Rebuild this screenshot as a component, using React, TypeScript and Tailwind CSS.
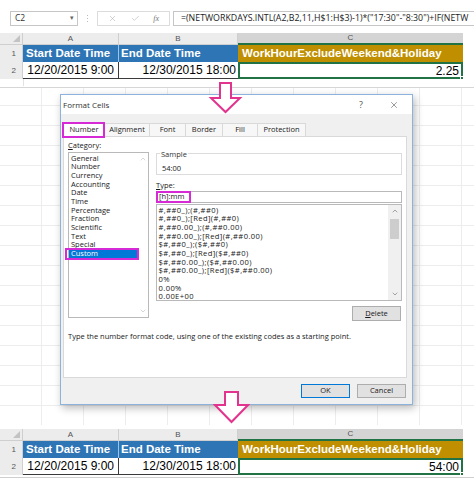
import { Check, ChevronDown, ChevronUp, X } from 'lucide-react'

// only the part of the formula that the bar has room for
const formula = '=(NETWORKDAYS.INTL(A2,B2,11,H$1:H$3)-1)*("17:30"-"8:30")+IF(NETW'

const categories = [
  'General',
  'Number',
  'Currency',
  'Accounting',
  'Date',
  'Time',
  'Percentage',
  'Fraction',
  'Scientific',
  'Text',
  'Special',
  'Custom',
]

const codes = [
  '#,##0_);(#,##0)',
  '#,##0_);[Red](#,##0)',
  '#,##0.00_);(#,##0.00)',
  '#,##0.00_);[Red](#,##0.00)',
  '$#,##0_);($#,##0)',
  '$#,##0_);[Red]($#,##0)',
  '$#,##0.00_);($#,##0.00)',
  '$#,##0.00_);[Red]($#,##0.00)',
  '0%',
  '0.00%',
  '0.00E+00',
]

const tabs = [
  { name: 'Number', w: 'w-[42px]' },
  { name: 'Alignment', w: 'w-[45px]' },
  { name: 'Font', w: 'w-[36px]' },
  { name: 'Border', w: 'w-[37px]' },
  { name: 'Fill', w: 'w-[35px]' },
  { name: 'Protection', w: 'w-[48px]' },
]

// one copy of the little worksheet, used above and below the dialog
function Sheet({ result }: { result: string }) {
  return (
    <div className="font-['Liberation_Sans',Arial,sans-serif]">
      <div className="flex h-[12px] text-[8px] text-[#555]">
        <div className="relative w-[23px] border-r border-b border-[#cfcfcf] bg-[#ececec]">
          <span className="absolute right-[2px] bottom-[2px] h-0 w-0 border-b-[7px] border-l-[7px] border-b-[#c3c3c3] border-l-transparent" />
        </div>
        <div className="flex w-[96px] items-center justify-center border-r border-b border-[#cfcfcf] bg-[#ececec]">A</div>
        <div className="flex w-[119px] items-center justify-center border-r border-b border-[#cfcfcf] bg-[#ececec]">B</div>
        <div className="flex w-[225px] items-center justify-center border-b-2 border-[#217346] bg-[#d4d4d4]">C</div>
      </div>
      <div className="flex h-[17px] text-[11.5px] font-bold text-white">
        <div className="flex w-[23px] items-center justify-end border-r border-[#cfcfcf] bg-[#ececec] pr-[6px] text-[8px] font-normal text-[#555]">
          1
        </div>
        <div className="flex w-[96px] items-center border-r border-[#9dc3e6] bg-[#2e75b6] pl-[3px]">Start Date Time</div>
        <div className="flex w-[119px] items-center bg-[#2e75b6] pl-[2px]">End Date Time</div>
        <div className="flex w-[225px] items-center bg-[#bf8f00] pl-[4px]">WorkHourExcludeWeekend&amp;Holiday</div>
      </div>
      <div className="flex h-[17px] text-[12px] text-black">
        <div className="flex w-[23px] items-center justify-end border-r border-[#cfcfcf] bg-[#ececec] pr-[6px] text-[8px] text-[#555]">
          2
        </div>
        <div className="flex w-[96px] items-center justify-end border-r border-b border-[#3a3a3a] pr-[4px]">12/20/2015 9:00</div>
        <div className="flex w-[119px] items-center justify-end border-b border-[#3a3a3a] pr-[2px]">12/30/2015 18:00</div>
        <div className="relative flex w-[225px] items-center justify-end border-2 border-[#217346] pr-[2px]">
          {result}
          <span className="absolute -right-[3px] -bottom-[3px] h-[4px] w-[4px] border border-white bg-[#217346]" />
        </div>
      </div>
    </div>
  )
}

function Magenta({ className }: { className: string }) {
  return <span className={`pointer-events-none absolute border-2 border-[#d62ad6] ${className}`} />
}

function FormatCells() {
  return (
    <div className="flex h-[311px] w-[353px] flex-col border border-[#8db2dc] bg-[#f0f0f0] font-['Open_Sans',sans-serif] text-[7.5px] text-[#1a1a1a] shadow-[2px_3px_8px_rgba(0,0,0,0.28)]">
      <div className="flex h-[19px] items-center bg-white pl-[2px] text-[8px] text-[#333]">
        <span>Format Cells</span>
        <span className="ml-auto mr-[26px] text-[9px] text-[#555]">?</span>
        <X className="mr-[13px] h-[10px] w-[10px] text-[#444]" strokeWidth={1.3} />
      </div>

      <div className="mt-[8px] flex h-[14px] pl-[2px]">
        {tabs.map((t, i) => (
          <div
            key={t.name}
            className={`relative flex items-center justify-center ${t.w} ${
              i === 0
                ? 'z-10 h-[15px] border border-b-0 border-[#d9d9d9] bg-white'
                : 'mt-[1px] h-[13px] border-t border-r border-[#d9d9d9] bg-[#f7f7f7]'
            }`}
          >
            {t.name}
            {i === 0 && <Magenta className="inset-[-1px] left-[-2px]" />}
          </div>
        ))}
      </div>

      <div className="mr-[5px] ml-[2px] flex h-[242px] flex-col border border-[#d9d9d9] bg-white pt-[4px] pr-[4px] pl-[4px]">
        <div className="flex gap-[7px]">
          <div className="flex w-[81px] flex-col">
            <div className="h-[11px] leading-[9px]">
              <u>C</u>ategory:
            </div>
            <div className="relative flex h-[166px] border border-[#b9b9b9]">
              <div className="flex flex-1 flex-col pt-[0.5px] leading-[8.7px]">
                {categories.map((c) => (
                  <div
                    key={c}
                    className={`relative h-[8.7px] pl-[2px] ${c === 'Custom' ? 'bg-[#0078d7] text-white' : ''}`}
                  >
                    {c}
                    {c === 'Custom' && <Magenta className="top-[-1.5px] right-[-2px] bottom-[-2px] left-[-4px]" />}
                  </div>
                ))}
              </div>
              <div className="flex w-[11px] flex-col items-center justify-between py-[2px] text-[#c2c2c2]">
                <ChevronUp className="h-[8px] w-[8px]" strokeWidth={2} />
                <ChevronDown className="h-[8px] w-[8px]" strokeWidth={2} />
              </div>
            </div>
          </div>

          <div className="flex flex-1 flex-col pt-[12px]">
            <div className="relative h-[22px] border border-[#dcdcdc] pt-[9px] pl-[5px]">
              <span className="absolute top-[-3px] left-[3px] bg-white px-[1px] leading-[7px] text-[#333]">Sample</span>
              54:00
            </div>
            <div className="mt-[6px] h-[9px] leading-[9px]">
              <u>T</u>ype:
            </div>
            <div className="relative mt-[1px] flex h-[12px] items-center border border-[#b9b9b9] pl-[2px]">
              [h]:mm
              <Magenta className="top-[-1px] bottom-[-1px] left-[-1px] w-[35px]" />
            </div>
            <div className="mt-[1px] flex h-[97px] border border-[#b9b9b9]">
              <div className="flex flex-1 flex-col pt-[0.5px] pl-[1.5px] text-[7.6px] leading-[8.7px] tracking-[0.4px]">
                {codes.map((c) => (
                  <div key={c} className="h-[8.7px] whitespace-nowrap">
                    {c}
                  </div>
                ))}
              </div>
              <div className="flex w-[13px] flex-col items-center bg-[#f0f0f0] py-[2px] text-[#7a7a7a]">
                <ChevronUp className="h-[8px] w-[8px]" strokeWidth={2} />
                <div className="mt-[4px] h-[20px] w-[9px] bg-[#cdcdcd]" />
                <ChevronDown className="mt-auto h-[8px] w-[8px]" strokeWidth={2} />
              </div>
            </div>
            <div className="mt-[5px] flex justify-end pr-[1px]">
              <div className="flex h-[15px] w-[49px] items-center justify-center border border-[#adadad] bg-[#e1e1e1]">
                <u>D</u>elete
              </div>
            </div>
          </div>
        </div>
        <div className="mt-[10px]">Type the number format code, using one of the existing codes as a starting point.</div>
      </div>

      <div className="flex flex-1 items-center justify-end gap-[7px] pr-[6px]">
        <div className="flex h-[14px] w-[49px] items-center justify-center border border-[#0078d7] bg-[#e1e1e1]">OK</div>
        <div className="flex h-[14px] w-[49px] items-center justify-center border border-[#adadad] bg-[#e1e1e1]">Cancel</div>
      </div>
    </div>
  )
}

function DownArrow({ className, w, h, points }: { className: string; w: number; h: number; points: string }) {
  return (
    <svg className={`pointer-events-none absolute ${className}`} width={w} height={h} viewBox={`0 0 ${w} ${h}`}>
      <polygon points={points} fill="white" stroke="#e2338e" strokeWidth={2} strokeLinejoin="miter" />
    </svg>
  )
}

export default function App() {
  return (
    <div className="relative h-[481px] w-[474px] overflow-hidden bg-white">
      {/* top: the sheet before formatting */}
      <div className="h-[88px] border-b border-[#d6d6d6]">
        <div className="flex h-[33px] items-start pt-[11px] font-['Open_Sans',sans-serif] text-[8.5px] text-[#333]">
          <div className="ml-[10px] flex h-[15px] w-[68px] items-center justify-between border border-[#c6c6c6] pr-[3px] pl-[4px]">
            <span>C2</span>
            <span className="text-[7px] text-[#666]">▾</span>
          </div>
          <div className="ml-[8px] flex h-[15px] w-[3px] flex-col items-center justify-center gap-[2px]">
            <span className="h-[1px] w-[1px] bg-[#bbb]" />
            <span className="h-[1px] w-[1px] bg-[#bbb]" />
            <span className="h-[1px] w-[1px] bg-[#bbb]" />
          </div>
          <div className="ml-[8px] flex h-[15px] w-[73px] items-center justify-around border border-[#dcdcdc] px-[3px] text-[#b0b0b0]">
            <X className="h-[9px] w-[9px]" strokeWidth={1.5} />
            <Check className="h-[9px] w-[9px]" strokeWidth={1.5} />
            <span className="font-['Liberation_Serif',serif] text-[8px] text-[#777] italic">fx</span>
          </div>
          <div className="ml-[3px] flex h-[15px] flex-1 items-center overflow-hidden border border-r-0 border-[#c6c6c6] pl-[7px] text-[8.8px] whitespace-nowrap text-[#222]">
            {formula}
          </div>
        </div>
        <Sheet result="2.25" />
        <div className="ml-[23px] h-[7px] w-[440px] border-l border-[#e2e2e2]" />
      </div>

      {/* middle: the Format Cells dialog over a faint grid */}
      <div className="h-[337px] bg-[image:repeating-linear-gradient(90deg,transparent_0px,transparent_41px,#ededed_41px,#ededed_42px),repeating-linear-gradient(0deg,transparent_0px,transparent_19px,#ededed_19px,#ededed_20px)] pt-[6px] pl-[60px]">
        <FormatCells />
      </div>

      {/* bottom: the sheet after formatting */}
      <div className="h-[56px] pt-[4px]">
        <Sheet result="54:00" />
        <div className="mt-[2px] h-[1px] w-[474px] bg-[#cfcfcf]" />
      </div>

      <DownArrow className="top-[81px] left-[208px]" w={35} h={34} points="12,2 23,2 23,17 32,17 17.5,31 3,17 12,17" />
      <DownArrow className="top-[390px] left-[213px]" w={37} h={35} points="12,2 25,2 25,15 35,15 18.5,32 2,15 12,15" />
    </div>
  )
}
